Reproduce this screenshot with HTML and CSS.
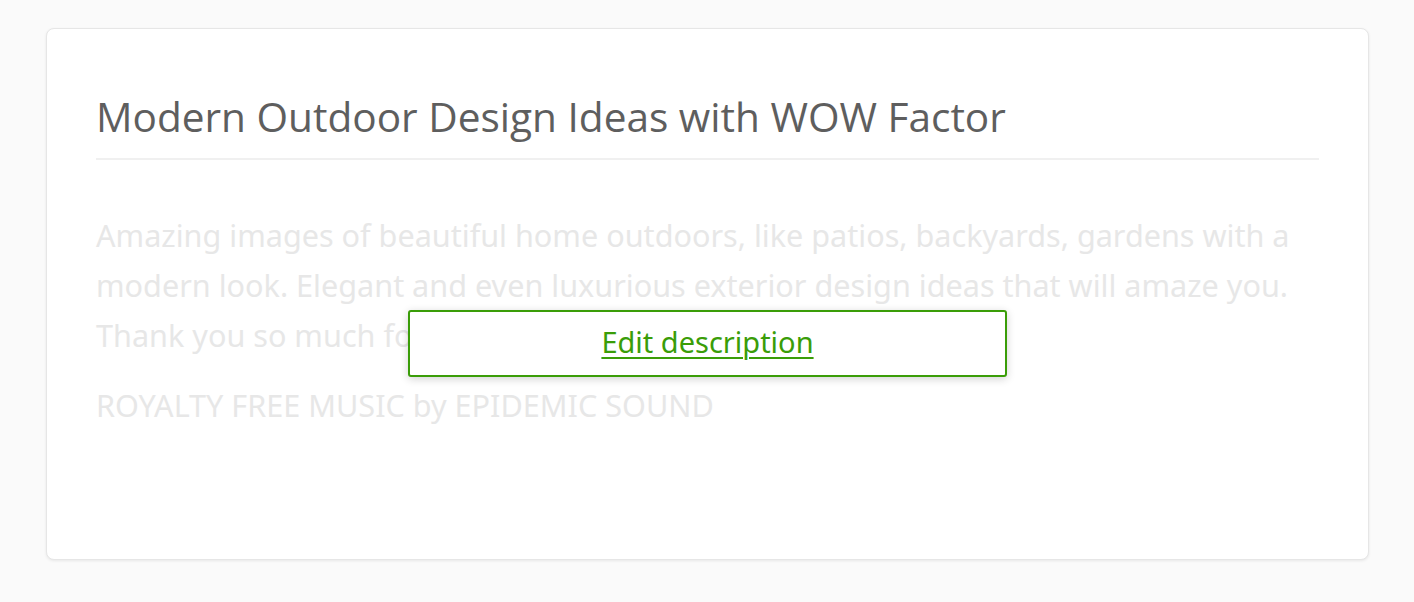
FILE: index.html
```html
<!DOCTYPE html>
<html lang="en">
<head>
<meta charset="utf-8">
<title>Modern Outdoor Design Ideas with WOW Factor</title>
<link rel="stylesheet" href="styles.css">
</head>
<body>
<main class="page">
  <section class="card">
    <h1 class="card-title">Modern Outdoor Design Ideas with WOW Factor</h1>
    <div class="description">
      <p>Amazing images of beautiful home outdoors, like patios, backyards, gardens with a modern look. Elegant and even luxurious exterior design ideas that will amaze you. Thank you so much for watching!</p>
      <p>ROYALTY FREE MUSIC by EPIDEMIC SOUND</p>
      <div class="edit-overlay">
        <a class="edit-link" href="#">Edit description</a>
      </div>
    </div>
  </section>
</main>
</body>
</html>
```

FILE: styles.css
```css
html, body {
  margin: 0;
  padding: 0;
  background: #fafafa;
}

.page {
  padding: 28px 45px 42px 46px;
}

.card {
  box-sizing: border-box;
  height: 532px;
  background: #ffffff;
  border: 1px solid #e6e6e6;
  border-radius: 8px;
  box-shadow: 0 1px 3px rgba(0, 0, 0, 0.08);
  padding: 62px 49px 40px 49px;
}

.card-title {
  margin: 0;
  padding-bottom: 15px;
  border-bottom: 2px solid #f0f0f0;
  font-family: "Open Sans", sans-serif;
  font-weight: 400;
  font-size: 40.6px;
  line-height: 52px;
  color: #5e5e5e;
}

.description {
  position: relative;
  margin-top: 50px;
  font-family: "Noto Sans", sans-serif;
  font-size: 30.6px;
  line-height: 50px;
  color: #e7e7e7;
}

.description p {
  margin: 0 0 20px 0;
}

.edit-overlay {
  position: absolute;
  left: 312px;
  top: 100px;
  box-sizing: border-box;
  width: 599px;
  height: 67px;
  padding-bottom: 4px;
  display: flex;
  align-items: center;
  justify-content: center;
  background: #ffffff;
  border: 2px solid #3a9d08;
  border-radius: 3px;
  box-shadow: 0 2px 8px rgba(0, 0, 0, 0.18);
}

.edit-link {
  font-family: "Noto Sans", sans-serif;
  font-size: 29px;
  line-height: 40px;
  color: #3a9d08;
  text-decoration: underline;
  text-decoration-thickness: 2px;
  text-underline-offset: 4px;
}
```
